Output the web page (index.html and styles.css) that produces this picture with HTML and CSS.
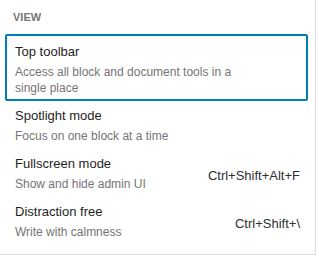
FILE: index.html
```html
<!DOCTYPE html>
<html lang="en">
<head>
  <meta charset="UTF-8" />
  <title>View options</title>
  <link rel="stylesheet" href="styles.css">
</head>
<body>
  <div class="panel">
    <div class="group-label">View</div>
    <div class="group">
      <div class="item is-focused">
        <div class="item-text">
          <div class="item-title">Top toolbar</div>
          <div class="item-info">Access all block and document tools in a single place</div>
        </div>
      </div>
      <div class="item">
        <div class="item-text">
          <div class="item-title">Spotlight mode</div>
          <div class="item-info">Focus on one block at a time</div>
        </div>
      </div>
      <div class="item">
        <div class="item-text">
          <div class="item-title">Fullscreen mode</div>
          <div class="item-info">Show and hide admin UI</div>
        </div>
        <span class="shortcut">Ctrl+Shift+Alt+F</span>
      </div>
      <div class="item">
        <div class="item-text">
          <div class="item-title">Distraction free</div>
          <div class="item-info">Write with calmness</div>
        </div>
        <span class="shortcut">Ctrl+Shift+\</span>
      </div>
    </div>
  </div>
</body>
</html>
```

FILE: styles.css
```css
body {
  margin: 0;
  background: #fff;
  font-family: 'Segoe UI', 'Liberation Sans', sans-serif;
}
.panel {
  width: 315px;
  height: 254px;
  border-right: 1px solid #ddd;
  border-bottom: 1px solid #ddd;
  box-sizing: content-box;
}
.group-label {
  padding: 9px 0 0 13px;
  height: 16px;
  line-height: 16px;
  font-size: 11px;
  font-weight: 600;
  text-transform: uppercase;
  color: #757575;
  margin-bottom: 9px;
}
.group {
  padding: 0 7px 0 5px;
}
.item {
  display: flex;
  align-items: center;
  padding: 5px 8px 5px 10px;
  border-radius: 2px;
}
.item.is-focused {
  padding-top: 8px;
  box-shadow: inset 0 0 0 2px #007cba;
}
.item-text {
  flex: 1;
  min-width: 0;
}
.item-title {
  font-size: 13px;
  line-height: 20px;
  color: #1e1e1e;
}
.item-info {
  margin-top: 2px;
  font-size: 12px;
  line-height: 16px;
  color: #757575;
  max-width: 230px;
}
.shortcut {
  font-size: 13px;
  color: #2f2f2f;
  padding-top: 4px;
}
```
